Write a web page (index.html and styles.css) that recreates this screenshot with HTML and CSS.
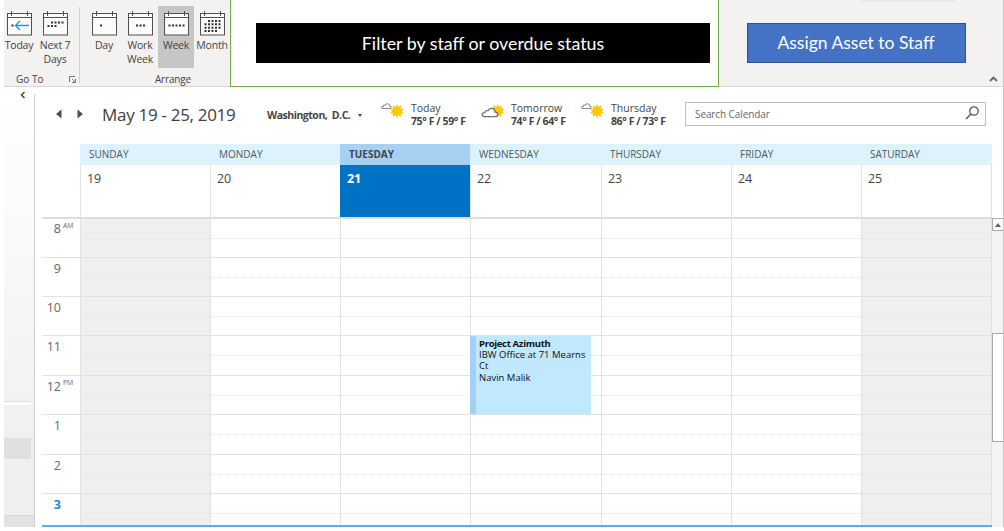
FILE: index.html
```html
<!DOCTYPE html>
<html lang="en">
<head>
<meta charset="utf-8">
<title>Calendar</title>
<link rel="stylesheet" href="styles.css">
</head>
<body>
<svg class="defs" width="0" height="0">
  <defs>
    <g id="cal">
      <rect x=".5" y="2.5" width="24" height="21.500" fill="#fbfbfb" stroke="#505050"/>
      <path d="M.5 6.5H24.500M4.500 0V5M20.500 0V5" fill="none" stroke="#505050"/>
    </g>
    <g id="sun">
      <path d="M7 0L8.300 2.800L11.200 1.200L10.900 4.500L14 5.200L11.800 7L14 9.200L10.900 9.600L11.200 12.800L8.300 11.200L7 14L5.700 11.200L2.800 12.800L3.100 9.600L0 9.200L2.200 7L0 5.200L3.100 4.500L2.800 1.200L5.700 2.800Z" fill="#ffc61a"/>
      <circle cx="7" cy="7" r="3.900" fill="#ffc800"/>
    </g>
    <path id="cloud" d="M3 8.500H12C15 8.500 15 5 12 4.800C11.800 1.500 7.500 .2 6 3.600C4 3 3.300 4 3.300 5.200C.2 5.200.2 8.500 3 8.500Z"/>
  </defs>
</svg>
<div class="window">
  <header class="ribbon">
    <section class="group goto">
      <div class="tools">
        <button class="tool"><svg width="25" height="25"><use href="#cal"/><path d="M22 14.500H8.500M13 10L8.500 14.500L13 19" fill="none" stroke="#2b95dc" stroke-width="1.400"/><path d="M4.500 13.500h2v2h-2z" fill="#333"/></svg><span>Today</span></button>
        <button class="tool"><svg width="25" height="25"><use href="#cal"/><path d="M8 11.500H21" stroke="#333" stroke-width="2" stroke-dasharray="2 1.500"/><path d="M4.500 15H14" stroke="#333" stroke-width="2" stroke-dasharray="2 1.500"/></svg><span>Next 7<br>Days</span></button>
      </div>
      <div class="group-name">Go To</div>
      <svg class="launcher" width="7" height="7"><path d="M.5 6V.5H6M3 3L6 6M6.500 3V6.500H3" fill="none" stroke="#777"/></svg>
    </section>
    <section class="group arrange">
      <div class="tools">
        <button class="tool"><svg width="25" height="25"><use href="#cal"/><path d="M8 13.500h2v2h-2z" fill="#333"/></svg><span>Day</span></button>
        <button class="tool"><svg width="25" height="25"><use href="#cal"/><path d="M8 14.500H17" stroke="#333" stroke-width="2" stroke-dasharray="2 1.500"/></svg><span>Work<br>Week</span></button>
        <button class="tool active"><svg width="25" height="25"><use href="#cal"/><path d="M4.500 14.500H21" stroke="#333" stroke-width="2" stroke-dasharray="2 1.500"/></svg><span>Week</span></button>
        <button class="tool"><svg width="25" height="25"><use href="#cal"/><path d="M8 10H21M4.500 13.300H21M4.500 16.700H21M4.500 20H17" stroke="#333" stroke-width="2" stroke-dasharray="2 1.500"/></svg><span>Month</span></button>
      </div>
      <div class="group-name">Arrange</div>
    </section>
    <section class="filter"><div class="filter-bar"><span>Filter by staff or overdue status</span></div></section>
    <section class="assign">
      <button class="assign-btn"><span>Assign Asset to Staff</span></button>
      <i class="tab-edge"></i>
      <svg class="collapse" width="9" height="6"><path d="M1 5L4.500 1.500L8 5" fill="none" stroke="#666" stroke-width="1.800"/></svg>
    </section>
  </header>
  <div class="body">
    <aside class="folders">
      <svg class="expand" width="6" height="8"><path d="M4.500 1L1.500 4L4.500 7" fill="none" stroke="#444" stroke-width="1.500"/></svg>
      <div class="pane"><i class="divider"></i><i class="selected"></i><i class="foot"></i></div>
    </aside>
    <main class="calendar">
      <div class="topbar">
        <svg class="nav" width="28" height="10"><path d="M5.500 .5V9.500L0 5ZM21.500 .5V9.500L27 5Z" fill="#505050"/></svg>
        <h1 class="range">May 19 - 25, 2019</h1>
        <div class="city"><span>Washington,&nbsp; D.C.</span><i class="caret"></i></div>
        <div class="weather w1">
          <svg width="25" height="20"><use href="#sun" x="9" y="3"/><use href="#cloud" transform="translate(0 1.500) scale(.72)" fill="#fff" stroke="#888" stroke-width="1.400"/></svg>
          <div><p>Today</p><b>75° F / 59° F</b></div>
        </div>
        <div class="weather w2">
          <svg width="25" height="20"><use href="#sun" x="9.500" y="3"/><use href="#cloud" transform="translate(0 5.500) scale(1.180)" fill="#fff" stroke="#707070" stroke-width="1.100"/></svg>
          <div><p>Tomorrow</p><b>74° F / 64° F</b></div>
        </div>
        <div class="weather w3">
          <svg width="25" height="20"><use href="#sun" x="9" y="3"/><use href="#cloud" transform="translate(0 1.500) scale(.72)" fill="#fff" stroke="#888" stroke-width="1.400"/></svg>
          <div><p>Thursday</p><b>86° F / 73° F</b></div>
        </div>
        <div class="search"><span>Search Calendar</span><svg width="15" height="14"><circle cx="9" cy="5" r="4.200" fill="none" stroke="#555" stroke-width="1.300"/><path d="M6 8L1 13" stroke="#555" stroke-width="1.500"/></svg></div>
      </div>
      <div class="week">
        <div class="names"><i></i><span>SUNDAY</span><span>MONDAY</span><span class="today">TUESDAY</span><span>WEDNESDAY</span><span>THURSDAY</span><span>FRIDAY</span><span>SATURDAY</span></div>
        <div class="dates"><i></i><span>19</span><span>20</span><span class="today">21</span><span>22</span><span>23</span><span>24</span><span>25</span></div>
        <div class="hour tall"><time>8<sup>AM</sup></time><i class="off"></i><i></i><i></i><i></i><i></i><i></i><i class="off"></i></div>
        <div class="hour"><time>9</time><i class="off"></i><i></i><i></i><i></i><i></i><i></i><i class="off"></i></div>
        <div class="hour"><time>10</time><i class="off"></i><i></i><i></i><i></i><i></i><i></i><i class="off"></i></div>
        <div class="hour tall"><time>11</time><i class="off"></i><i></i><i></i>
          <i><span class="event"><b>Project Azimuth</b><span>IBW Office at 71 Mearns Ct</span><span>Navin Malik</span></span></i>
          <i></i><i></i><i class="off"></i></div>
        <div class="hour"><time>12<sup>PM</sup></time><i class="off"></i><i></i><i></i><i></i><i></i><i></i><i class="off"></i></div>
        <div class="hour tall"><time>1</time><i class="off"></i><i></i><i></i><i></i><i></i><i></i><i class="off"></i></div>
        <div class="hour"><time>2</time><i class="off"></i><i></i><i></i><i></i><i></i><i></i><i class="off"></i></div>
        <div class="hour last"><time class="now">3</time><i class="off"></i><i></i><i></i><i></i><i></i><i></i><i class="off"></i></div>
      </div>
    </main>
    <div class="scroll"><i class="up"><svg width="6" height="4"><path d="M0 4L3 0L6 4Z" fill="#666"/></svg></i><i class="thumb"></i></div>
  </div>
</div>
</body>
</html>
```

FILE: styles.css
```css
* { box-sizing: border-box; margin: 0; padding: 0; }
body { background: #fff; font-family: "Open Sans", "Noto Sans", sans-serif; color: #444; width: 1004px; height: 531px; overflow: hidden; }
i { font-style: normal; display: block; }
svg { display: block; flex: none; }
.defs { position: absolute; }
button { font: inherit; color: inherit; border: 0; background: none; }
.window { width: 1000px; height: 527px; margin-left: 4px; display: flex; flex-direction: column; border-right: 1px solid #c4c4c4; }

.ribbon { height: 87px; flex: none; display: flex; background: #f3f2f1; border-bottom: 1px solid #d4d4d4; }
.group { position: relative; display: flex; flex-direction: column; }
.goto { width: 75px; }
.arrange { width: 151px; padding-left: 7px; }
.arrange::before { content: ""; position: absolute; left: 0; top: 7px; width: 1px; height: 76px; background: #d0d0d0; }
.tools { display: flex; height: 63px; margin-top: 6px; }
.tool { width: 36px; display: flex; flex-direction: column; align-items: center; padding-top: 5px; }
.goto .tool { position: relative; }
.goto .tool:first-child { margin-left: -3px; }
.tool span { font-size: 10.5px; line-height: 14px; letter-spacing: -.2px; margin-top: 2px; white-space: nowrap; }
.tool.active { background: #c6c6c6; }
.group-name { font-size: 10px; line-height: 14px; margin-top: 4px; padding-left: 12px; }
.arrange .group-name { padding-left: 69px; letter-spacing: -.2px; }
.launcher { position: absolute; left: 65px; top: 76px; }
.filter { width: 489px; height: 87px; background: #fff; border: 1px solid #70ad47; border-top: 0; padding: 23px 8px 0 25px; }
.filter-bar { height: 40px; background: #000; color: #fff; display: flex; justify-content: center; font: 17.8px/40px Lato, sans-serif; }
.assign { flex: 1; position: relative; padding: 23px 0 0 28px; }
.assign-btn { width: 219px; height: 40px; background: #4472c4; border: 1px solid #2f528f; color: #fff; font: 17.5px/38px Lato, sans-serif; padding-right: 1px; }
.tab-edge { position: absolute; left: 142px; top: 0; width: 95px; height: 2px; background: #e9e8e7; border-radius: 0 0 3px 3px; }
.collapse { position: absolute; right: 5px; top: 76px; }

.body { flex: 1; display: flex; min-height: 0; }
.folders { width: 31px; display: flex; flex-direction: column; position: relative; background: linear-gradient(#fff, #fafafa 30%, #f0f0f0 80%, #efefef); }
.folders::after { content: ""; position: absolute; right: 0; top: 7px; bottom: 0; width: 1px; background: #d0d0d0; }
.expand { margin: 4px 0 0 16px; }
.pane { flex: 1; display: flex; flex-direction: column; padding-top: 302px; }
.divider { height: 4px; width: 27px; border-top: 1px solid #dcdcdc; background: #fff; }
.selected { height: 21px; width: 27px; margin-top: 33px; background: #e0e0e0; }
.foot { margin-top: auto; height: 12px; background: #e2e2e2; border-top: 1px solid #d8d8d8; }
.calendar { width: 957px; padding-left: 7px; display: flex; flex-direction: column; }

.topbar { height: 57px; display: flex; align-items: flex-start; }
.nav { margin: 22px 0 0 14px; }
.range { font-size: 17px; font-weight: 400; line-height: 24px; width: 165px; margin: 16px 0 0 18px; white-space: nowrap; letter-spacing: -.3px; color: #404040; }
.city { width: 114px; display: flex; align-items: center; justify-content: space-between; font-size: 10.5px; font-weight: 700; letter-spacing: -.48px; line-height: 14px; margin-top: 21px; padding-right: 19px; white-space: nowrap; }
.caret { border: 2.5px solid transparent; border-top: 3px solid #444; border-bottom: 0; }
.weather { display: flex; gap: 5px; margin-top: 14px; width: 100px; font-size: 10.5px; line-height: 13px; white-space: nowrap; }
.weather > div { padding-top: 1px; }
.weather b { display: block; letter-spacing: -.4px; }
.w3 { width: 104px; }
.search { width: 301px; height: 24px; margin-top: 15px; border: 1px solid #bcbfc5; display: flex; align-items: center; justify-content: space-between; padding: 0 5px 0 9px; font-size: 10px; letter-spacing: -.1px; color: #666; }
.search svg { margin-bottom: 2px; }

.week { width: 950px; display: flex; flex-direction: column; }
.names, .dates, .hour { display: grid; grid-template-columns: 38px 130px 130px 130px 131px 130px 130px 131px; }
.names { height: 21px; font-size: 10px; line-height: 21px; color: #505860; }
.names span { background: #dcf3fe; padding-left: 9px; }
.names .today { background: #a6d1f5; font-weight: 700; color: #444; }
.dates { height: 52px; font-size: 12.5px; line-height: 17px; }
.dates span { padding: 5px 0 0 6px; border-left: 1px solid #e2e2e2; letter-spacing: -.2px; }
.dates span:last-child, .hour i:last-child { border-right: 1px solid #e0e0e0; }
.dates .today { background: #0072c6; color: #fff; font-weight: 700; border-color: #0072c6; }
.hour { height: 39px; border-top: 1px solid #e1e1e1; }
.hour.tall { height: 40px; }
.hour > i { position: relative; border-left: 1px solid #e2e2e2; }
.hour > i::before { content: ""; position: absolute; left: 0; right: 0; top: 19px; border-top: 1px dotted #e4e4e4; }
.hour .off { background: #efefef; }
.hour.last { height: 34px; border-bottom: 2px solid #5aaee6; }
.hour time { font-size: 12.5px; line-height: 16px; padding: 3px 19px 0 0; text-align: right; position: relative; color: #666; }
.hour sup { position: absolute; left: 21px; top: 3px; font-size: 6.8px; line-height: 8px; }
.hour .now { color: #1a86d9; font-weight: 700; }
.dates + .hour { border-top: 2px solid #dedede; }
.dates + .hour time { padding-top: 2px; }
.event { position: absolute; z-index: 1; left: -1px; top: 0; width: 121px; height: 78px; padding: 2px 4px 0 3px; border-left: 6px solid #a3d0f3; background: #c0e8fe; color: #111; font-size: 9.5px; line-height: 11.200px; }
.event b, .event span { display: block; }
.event b { letter-spacing: -.32px; }
.scroll { flex: 1; padding-top: 131px; display: flex; flex-direction: column; background: linear-gradient(#fff 144px, #f3f3f3 144px); }
.up { height: 13px; border: 1px solid #aaa; border-right: 0; display: grid; place-items: center; }
.thumb { height: 109px; margin-top: 102px; border: 1px solid #aaa; border-right: 0; background: #fff; }
```
